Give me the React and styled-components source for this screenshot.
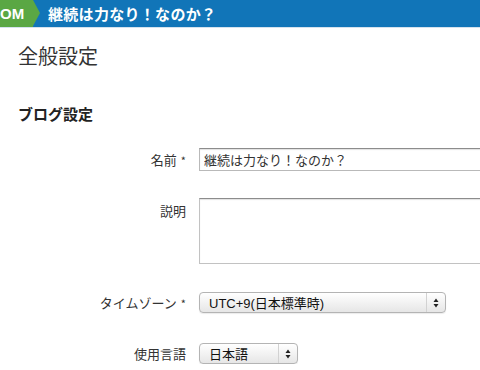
import React from "react";
import styled, { createGlobalStyle } from "styled-components";

const Global = createGlobalStyle`
  html, body { margin: 0; padding: 0; background: #fff; overflow: hidden; }
  body { font-family: "Liberation Sans", "Noto Sans CJK JP", sans-serif; color: #333; }
`;

const Header = styled.header`
  display: flex;
  align-items: center;
  height: 27px;
  background: #1175b8;
  border-bottom: 1px solid #d4e2ee;
  overflow: hidden;
`;

const Brand = styled.div`
  position: relative;
  display: flex;
  align-items: center;
  height: 100%;
  width: 33px;
  background: #5aa744;
  color: #fff;
  font-weight: bold;
  font-size: 15px;
  padding-left: 0;
  letter-spacing: 0.2px;
  &::after {
    content: "";
    position: absolute;
    right: -7px;
    top: 0;
    border-top: 13.5px solid transparent;
    border-bottom: 13.5px solid transparent;
    border-left: 7px solid #5aa744;
  }
`;

const BlogTitle = styled.div`
  margin-left: 15px;
  color: #fff;
  font-weight: bold;
  font-size: 15px;
  font-family: "Noto Sans CJK JP", sans-serif;
  letter-spacing: 0.3px;
`;

const Main = styled.main`
  padding: 14px 0 0 18px;
`;

const PageTitle = styled.h1`
  margin: 0;
  font-size: 20px;
  line-height: 28px;
  font-weight: normal;
  color: #333;
  font-family: "Noto Sans CJK JP", sans-serif;
`;

const SectionTitle = styled.h2`
  margin: 34px 0 0;
  font-size: 15px;
  line-height: 20px;
  font-weight: bold;
  color: #222;
  font-family: "Noto Sans CJK JP", sans-serif;
`;

const Form = styled.form`
  margin-top: 24px;
  display: flex;
  flex-direction: column;
`;

const Row = styled.div`
  display: grid;
  grid-template-columns: 168px auto;
  column-gap: 13px;
  align-items: ${(p) => (p.$top ? "start" : "center")};
  margin-top: ${(p) => p.$mt || 0}px;
`;

const Label = styled.label`
  text-align: right;
  font-size: 13px;
  color: #333;
  font-family: "Noto Sans CJK JP", sans-serif;
  padding-top: ${(p) => p.$pt || 0}px;
  white-space: nowrap;
`;

const Star = styled.span`
  margin-left: 4px;
  font-size: 11px;
`;

const TextInput = styled.input`
  box-sizing: border-box;
  width: 320px;
  height: 23px;
  border: 1px solid #b9b9b9;
  border-top-color: #8c8c8c;
  box-shadow: inset 0 1px 1px rgba(0,0,0,0.12);
  padding: 0 4px;
  font-size: 13px;
  color: #333;
  font-family: "Noto Sans CJK JP", sans-serif;
  outline: none;
`;

const TextArea = styled.textarea`
  box-sizing: border-box;
  width: 320px;
  height: 66px;
  border: 1px solid #c2c2c2;
  border-top-color: #8c8c8c;
  box-shadow: inset 0 1px 1px rgba(0,0,0,0.12);
  resize: none;
  outline: none;
`;

const Select = styled.div`
  box-sizing: border-box;
  display: flex;
  align-items: stretch;
  width: ${(p) => p.$w}px;
  height: 21px;
  border: 1px solid #b4b4b4;
  border-radius: 4px;
  background: linear-gradient(#ffffff, #f0f0f0 60%, #e6e6e6);
  box-shadow: 0 1px 1px rgba(0,0,0,0.08);
  font-size: 13px;
  color: #111;
`;

const SelectText = styled.span`
  flex: 1;
  display: flex;
  align-items: center;
  padding-left: 9px;
  font-family: "Liberation Sans", "Noto Sans CJK JP", sans-serif;
`;

const Arrow = styled.span`
  width: 18px;
  border-left: 1px solid #d2d2d2;
  display: flex;
  align-items: center;
  justify-content: center;
`;

const Updown = () => (
  <svg width="6" height="10" viewBox="0 0 6 10">
    <path d="M3 0.5 L5.5 4 L0.5 4 Z" fill="#222" />
    <path d="M3 9.5 L5.5 6 L0.5 6 Z" fill="#222" />
  </svg>
);

export default function App() {
  return (
    <>
      <Global />
      <Header>
        <Brand>OM</Brand>
        <BlogTitle>継続は力なり！なのか？</BlogTitle>
      </Header>
      <Main>
        <PageTitle>全般設定</PageTitle>
        <SectionTitle>ブログ設定</SectionTitle>
        <Form>
          <Row>
            <Label>名前<Star>*</Star></Label>
            <TextInput defaultValue="継続は力なり！なのか？" />
          </Row>
          <Row $top $mt={27}>
            <Label $pt={3}>説明</Label>
            <TextArea />
          </Row>
          <Row $mt={28}>
            <Label>タイムゾーン<Star>*</Star></Label>
            <Select $w={247}>
              <SelectText>UTC+9(日本標準時)</SelectText>
              <Arrow><Updown /></Arrow>
            </Select>
          </Row>
          <Row $mt={30}>
            <Label>使用言語</Label>
            <Select $w={99}>
              <SelectText>日本語</SelectText>
              <Arrow><Updown /></Arrow>
            </Select>
          </Row>
        </Form>
      </Main>
    </>
  );
}
